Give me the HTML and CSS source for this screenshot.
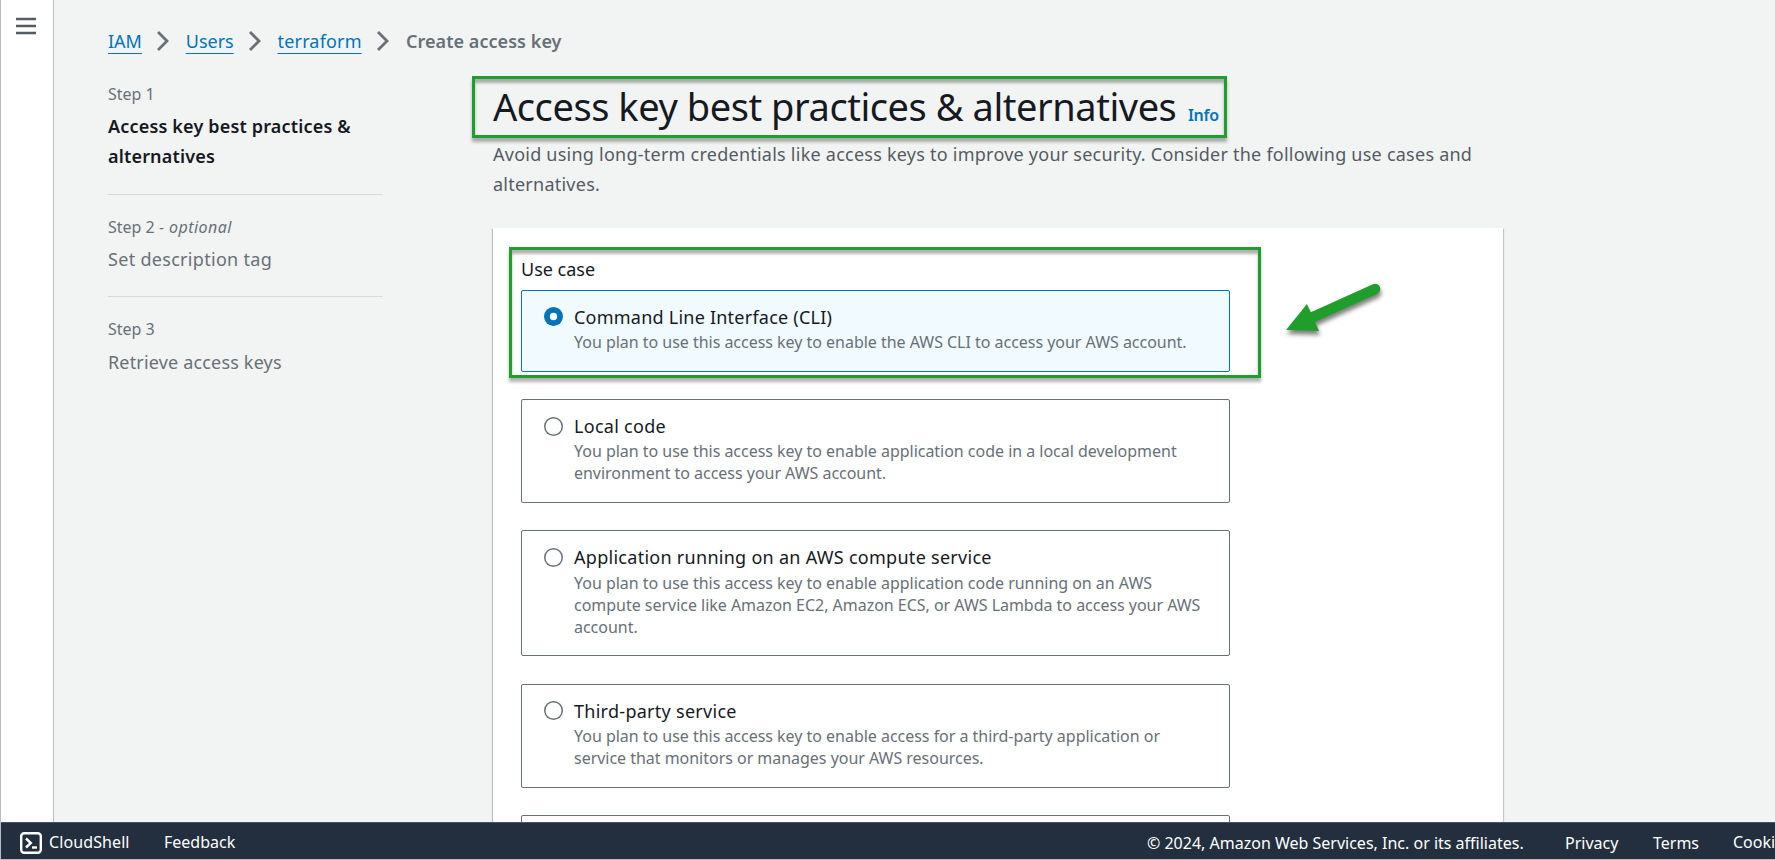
FILE: index.html
```html
<!DOCTYPE html>
<html lang="en">
<head>
<meta charset="utf-8">
<title>Create access key | IAM</title>
<link rel="stylesheet" href="styles.css">
</head>
<body>
<div class="shell">
  <aside class="rail">
    <svg class="menu" width="20" height="18" viewBox="0 0 20 18"><path d="M0 2h20M0 9h20M0 16h20" stroke="#545b64" stroke-width="2.6"/></svg>
  </aside>
  <div class="content">
    <nav class="crumbs">
      <a class="link" href="#">IAM</a>
      <svg class="chev" width="12" height="20" viewBox="0 0 12 20"><path d="M1 1 10 10l-9 9"/></svg>
      <a class="link" href="#">Users</a>
      <svg class="chev" width="12" height="20" viewBox="0 0 12 20"><path d="M1 1 10 10l-9 9"/></svg>
      <a class="link link-wide" href="#">terraform</a>
      <svg class="chev" width="12" height="20" viewBox="0 0 12 20"><path d="M1 1 10 10l-9 9"/></svg>
      <span class="current">Create access key</span>
    </nav>
    <div class="layout">
      <ol class="steps">
        <li class="step active"><div class="step-no">Step 1</div><div class="step-name">Access key best practices &amp; alternatives</div></li>
        <li class="step"><div class="step-no">Step 2 <i class="optional">- optional</i></div><div class="step-name tag">Set description tag</div></li>
        <li class="step last"><div class="step-no">Step 3</div><div class="step-name">Retrieve access keys</div></li>
      </ol>
      <main class="main">
        <header class="head">
          <h1 class="title">Access key best practices &amp; alternatives</h1>
          <a class="info" href="#">Info</a>
          <div class="mark mark-title"></div>
        </header>
        <p class="lead">Avoid using long-term credentials like access keys to improve your security. Consider the following use cases and<br>alternatives.</p>
        <section class="card">
          <div class="label">Use case</div>
          <div class="tiles">
            <div class="tile selected"><span class="radio"></span><div><div class="name">Command Line Interface (CLI)</div><div class="desc">You plan to use this access key to enable the AWS CLI to access your AWS account.</div></div></div>
            <div class="tile"><span class="radio"></span><div><div class="name">Local code</div><div class="desc">You plan to use this access key to enable application code in a local development<br>environment to access your AWS account.</div></div></div>
            <div class="tile"><span class="radio"></span><div><div class="name">Application running on an AWS compute service</div><div class="desc desc-long">You plan to use this access key to enable application code running on an AWS<br>compute service like Amazon EC2, Amazon ECS, or AWS Lambda to access your AWS<br>account.</div></div></div>
            <div class="tile"><span class="radio"></span><div><div class="name">Third-party service</div><div class="desc">You plan to use this access key to enable access for a third-party application or<br>service that monitors or manages your AWS resources.</div></div></div>
            <div class="tile tile-next"></div>
          </div>
          <div class="mark mark-case"></div>
          <svg class="arrow" width="110" height="64" viewBox="0 0 110 64"><path d="M33 42 95 14" stroke="#1f9e2c" stroke-width="10.500" stroke-linecap="round"/><path d="M6 55 27 29 39 56z" fill="#1f9e2c"/></svg>
        </section>
      </main>
    </div>
  </div>
</div>
<footer class="footer">
  <svg class="cloudshell" width="22" height="22" viewBox="0 0 22 22" fill="none" stroke="#fff"><rect x="1.200" y="1.200" width="19.600" height="19.600" rx="3" stroke-width="2.400"/><path d="M6 6.500 10.800 11 6 15.500" stroke-width="2.400"/><path d="M12 15.500h5" stroke-width="2.400"/></svg>
  <span class="foot-shell">CloudShell</span>
  <span class="foot-feedback">Feedback</span>
  <span class="foot-copy">© 2024, Amazon Web Services, Inc. or its affiliates.</span>
  <span class="foot-privacy">Privacy</span>
  <span class="foot-terms">Terms</span>
  <span class="foot-cookie">Cooki</span>
</footer>
</body>
</html>
```
FILE: styles.css
```css
* { box-sizing: border-box; }
body {
  margin: 0;
  height: 860px;
  overflow: hidden;
  display: flex;
  flex-direction: column;
  border-left: 1px solid #b9bbbd;
  border-bottom: 1px solid #b9bbc1;
  background: #f2f4f3;
  color: #16191f;
  font: 18px/30px "Noto Sans", "Open Sans", sans-serif;
}
.shell { flex: 1; min-height: 0; display: flex; overflow: hidden; }
.rail { flex: none; width: 53px; padding: 17px 0 0 15px; background: #fff; border-right: 1px solid #bcc2c6; }
.menu { display: block; }
.content { flex: 1; padding: 26px 0 0 54px; }
.crumbs { display: flex; align-items: center; height: 30px; }
.link {
  color: #0073bb;
  text-decoration: underline 1px;
  text-underline-offset: 5px;
  text-decoration-skip-ink: none;
}
.link-wide { letter-spacing: .17px; }
.chev { flex: none; margin: 0 16.300px 0 15.500px; fill: none; stroke: #687078; stroke-width: 2.8; overflow: visible; }
.current { margin-left: .5px; font-weight: 600; color: #687078; letter-spacing: .05px; }
.layout { display: grid; grid-template-columns: 275px 1010px; column-gap: 110px; margin-top: 27px; }
.steps { margin: 0; padding: 0; list-style: none; color: #687078; }
.step + .step { margin-top: 22px; padding-top: 21px; border-top: 1px solid #d5dbdb; }
.step-no { font-size: 16px; line-height: 22px; }
.optional { letter-spacing: .45px; }
.step-name { margin-top: 6px; letter-spacing: .17px; }
.tag { letter-spacing: .3px; }
.last .step-name { margin-top: 7px; }
.active .step-name { font-weight: 600; color: #16191f; letter-spacing: .17px; }
.active { padding-bottom: 1px; }
.head { position: relative; display: flex; align-items: baseline; height: 46px; }
.title { margin: 0; font-size: 38px; line-height: 46px; font-weight: 400; letter-spacing: -.45px; white-space: nowrap; }
.info { margin-left: 11.500px; font-size: 16px; line-height: 22px; font-weight: 600; letter-spacing: -.2px; color: #0073bb; text-decoration: none; }
.lead { margin: 10px 0 29px; color: #545b64; letter-spacing: .24px; white-space: nowrap; }
.card {
  position: relative;
  height: 640px;
  padding: 29px 28px;
  background: #fff;
  box-shadow: 0 1px 1px 0 rgba(0, 28, 36, .3), 1px 1px 1px 0 rgba(0, 28, 36, .15), -1px 1px 1px 0 rgba(0, 28, 36, .2);
}
.label { line-height: 24px; margin-bottom: 9px; }
.tiles { display: flex; flex-direction: column; gap: 27.200px; width: 709px; }
.tile { display: flex; gap: 11px; padding: 14px 0 17.400px 22px; border: 1px solid #687078; border-radius: 2px; }
.tile-next { height: 80px; }
.selected { background: #f1faff; border-color: #0073bb; }
.radio { flex: none; width: 19px; height: 19px; margin-top: 2.700px; border-radius: 50%; background: #fff; box-shadow: inset 0 0 0 1.500px #687078; }
.selected .radio { margin-top: 2px; box-shadow: inset 0 0 0 5.800px #0073bb; }
.name { line-height: 24px; letter-spacing: .28px; }
.selected .name { letter-spacing: .23px; }
.desc { margin-top: 2px; font-size: 16px; line-height: 22.300px; letter-spacing: -.025px; color: #687078; white-space: nowrap; }
.desc-long { margin: 2.800px 0 -.5px; line-height: 22.200px; }

/* Annotation overlays */
.mark { position: absolute; border: 3px solid #1f9e2c; box-shadow: 0 4px 3px rgba(0, 0, 0, .3), inset 0 4px 3px rgba(0, 0, 0, .3); }
.mark-title { left: -21px; top: -7px; width: 755px; height: 62px; }
.mark-case { left: 16px; top: 19px; width: 752px; height: 131px; }
.arrow { position: absolute; left: 787px; top: 47px; filter: drop-shadow(1px 4px 2px rgba(0, 0, 0, .5)); }

.footer {
  flex: none;
  display: flex;
  align-items: center;
  height: 37px;
  padding: 2px 0 0 19px;
  overflow: hidden;
  background: #232f3e;
  border-top: 1px solid #4b5560;
  color: #fff;
  font-size: 16px;
  line-height: 24px;
  white-space: nowrap;
}
.cloudshell { flex: none; margin: 2px 7px 0 0; }
.foot-shell { flex: none; width: 115px; letter-spacing: .1px; }
.foot-feedback { flex: none; width: 983px; }
.foot-copy { flex: none; width: 418px; padding-top: 2px; }
.foot-privacy { flex: none; width: 88px; padding-top: 2px; }
.foot-terms { flex: none; width: 80px; padding-top: 2px; }
.foot-cookie { flex: none; }
```
